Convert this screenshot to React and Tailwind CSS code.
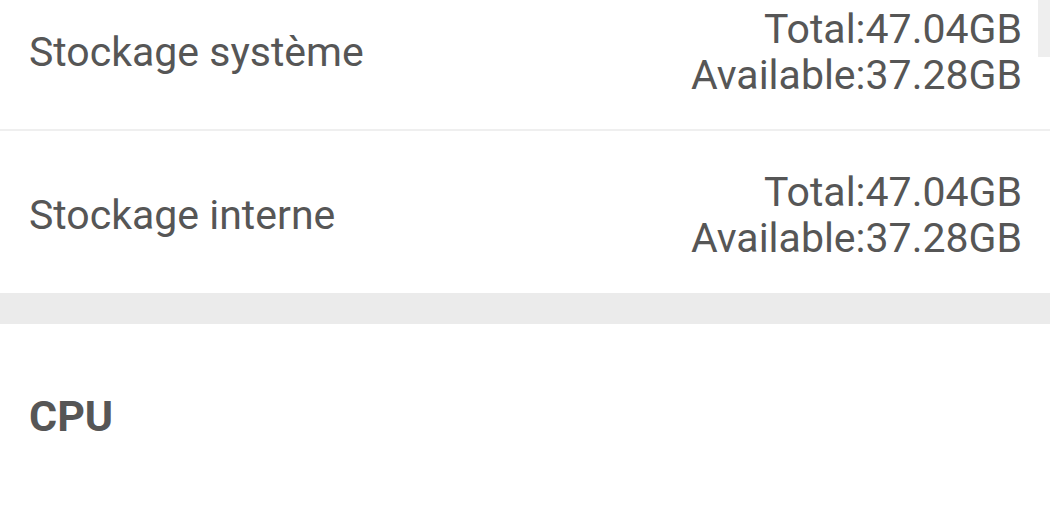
import React from "react";

const rows = [
  { label: "Stockage système", total: "47.04GB", available: "37.28GB" },
  { label: "Stockage interne", total: "47.04GB", available: "37.28GB" },
];

const StorageRow = ({ label, total, available, last }) => (
  <div
    className={`h-[162px] pt-[5px] flex items-center justify-between pl-[29px] pr-[28px] ${
      last ? "" : "border-b-2 border-[#efefef]"
    }`}
  >
    <span className="text-[41px] leading-[46px]">{label}</span>
    <div className="text-right text-[41px] leading-[46px]">
      <div>Total:{total}</div>
      <div>Available:{available}</div>
    </div>
  </div>
);

export default function App() {
  return (
    <div
      className="relative h-[525px] w-full overflow-hidden bg-white text-[#565656]"
      style={{ fontFamily: "Roboto, 'Liberation Sans', sans-serif" }}
    >
      {/* list scrolled a little, first row is cut at the top */}
      <div className="-mt-[31px]">
        {rows.map((r, i) => (
          <StorageRow key={r.label} {...r} last={i === rows.length - 1} />
        ))}
      </div>

      {/* section divider */}
      <div className="h-[31px] bg-[#ebebeb]" />

      {/* CPU section */}
      <div className="px-[29px] pt-[67px]">
        <h2 className="text-[43px] leading-[50px] font-bold">CPU</h2>
      </div>

      {/* scrollbar thumb */}
      <div className="absolute top-0 right-0 w-[12px] h-[57px] bg-[#eeeeee]" />
    </div>
  );
}
